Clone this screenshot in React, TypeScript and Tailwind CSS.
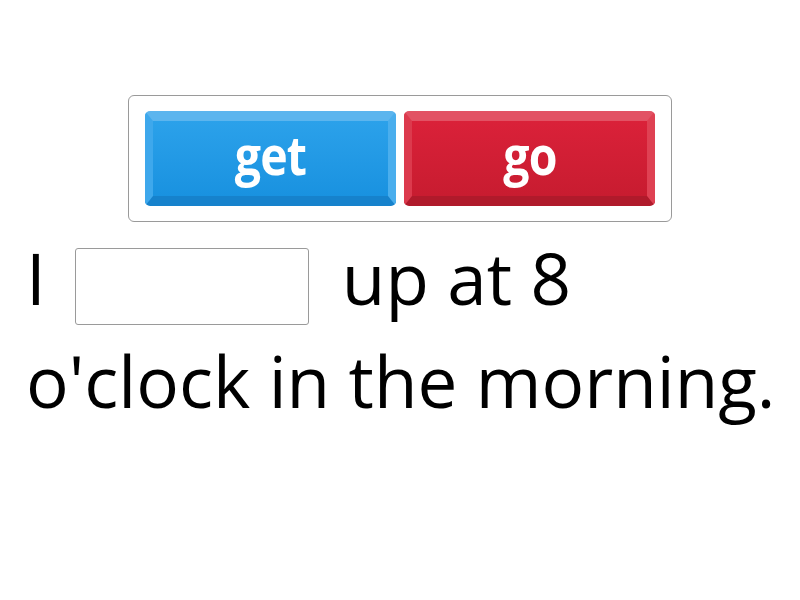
const words = [
  {
    label: 'get',
    className:
      'border-t-[#5cb5ee] border-l-[#3ea8ec] border-r-[#4aaeed] border-b-[#1682cc] bg-gradient-to-b from-[#2ba1ea] to-[#1992e0]',
  },
  {
    label: 'go',
    className:
      'border-t-[#e25264] border-l-[#dc3a4d] border-r-[#df4153] border-b-[#b01a2b] bg-gradient-to-b from-[#da2139] to-[#c81c30]',
  },
];

export default function App() {
  return (
    <div className="min-h-[600px] w-[800px] bg-white pt-[95px] font-['Open_Sans',sans-serif] text-black">
      <div className="mx-auto flex w-[544px] gap-2 rounded-[6px] border border-[#9a9a9a] px-4 py-[15px]">
        {words.map((w) => (
          <div
            key={w.label}
            className={`flex h-[95px] w-[251px] items-center justify-center rounded-[5px] border-t-[10px] border-b-[10px] border-x-[8px] border-solid ${w.className}`}
          >
            <span className="inline-block -translate-y-[5px] scale-x-[0.86] text-[54px] leading-none font-bold tracking-[-1px] text-white">
              {w.label}
            </span>
          </div>
        ))}
      </div>

      <p className="mt-[4px] pl-[26px] pr-4 text-[71px] leading-[103px]">
        I
        <span className="ml-[29px] mr-[33px] inline-block h-[77px] w-[234px] rounded-[3px] border border-[#9a9a9a] align-[-20px]" />
        up at 8 o'clock in the morning.
      </p>
    </div>
  );
}
